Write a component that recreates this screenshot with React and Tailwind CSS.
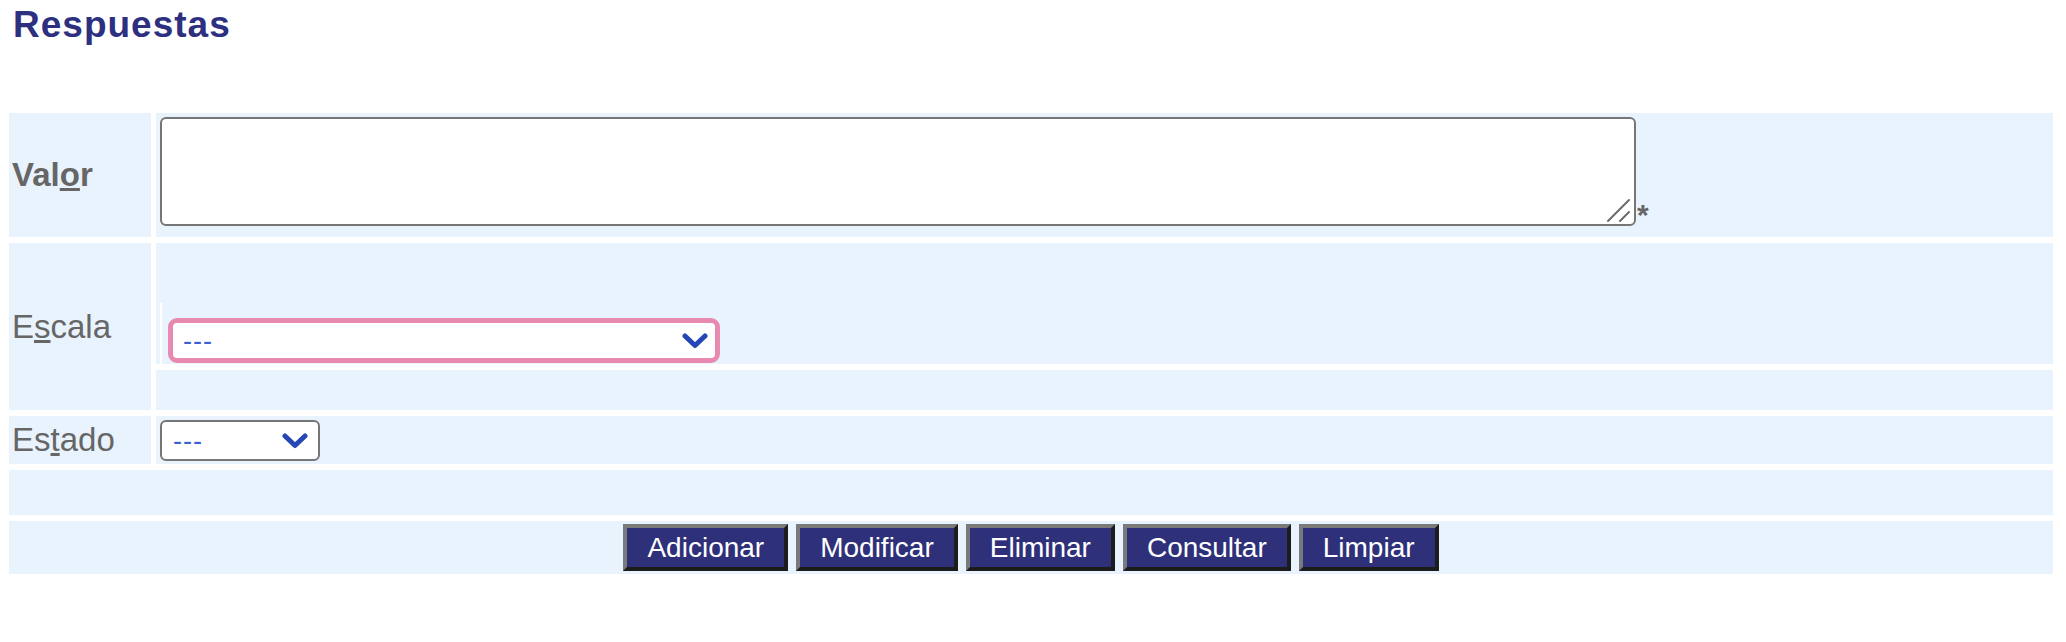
import React from "react";

function Chevron() {
  return (
    <svg width="26" height="16" viewBox="0 0 26 16" className="shrink-0">
      <polyline
        points="3,3 13,12.5 23,3"
        fill="none"
        stroke="#2546b5"
        strokeWidth="5"
        strokeLinecap="round"
        strokeLinejoin="round"
      />
    </svg>
  );
}

const buttons = ["Adicionar", "Modificar", "Eliminar", "Consultar", "Limpiar"];

export default function App() {
  return (
    <div className="w-full h-[642px] bg-white font-['Liberation_Sans',Arial,sans-serif]">
      {/* titulo */}
      <h1 className="pl-[13px] pt-[4px] text-[37px] leading-[42px] font-bold tracking-[1px] text-[#2d307f]">
        Respuestas
      </h1>

      {/* formulario */}
      <div className="mt-[67px] ml-[9px] mr-[13px] grid grid-cols-[142px_1fr] gap-x-[5px] gap-y-[6px] text-[33px] text-[#666666]">
        {/* Valor */}
        <div className="h-[124px] bg-[#e9f3fd] pl-[3px] flex items-center font-bold">
          <span className="leading-[38px]">
            Val<u>o</u>r
          </span>
        </div>
        <div className="h-[124px] bg-[#e9f3fd] pl-[4px] pt-[4px] pb-[11px] flex items-end">
          <div className="relative w-[1476px] h-[109px]">
            <textarea className="w-full h-full resize-none bg-white border-2 border-[#767676] rounded-[6px] outline-none" />
            <svg width="26" height="26" viewBox="0 0 26 26" className="absolute right-[4px] bottom-[3px]">
              <line x1="2" y1="24" x2="23" y2="3" stroke="#6a6a6a" strokeWidth="2" strokeLinecap="round" />
              <line x1="14" y1="24" x2="23" y2="15" stroke="#6a6a6a" strokeWidth="2" strokeLinecap="round" />
            </svg>
          </div>
          <span className="ml-[1px] mb-[-4px] text-[30px] leading-[30px] font-bold">*</span>
        </div>

        {/* Escala */}
        <div className="h-[167px] bg-[#e9f3fd] pl-[3px] flex items-center">
          <span className="leading-[38px]">
            E<u>s</u>cala
          </span>
        </div>
        <div className="h-[167px] flex flex-col gap-[6px]">
          <div className="h-[121px] bg-[#e9f3fd] pl-[4px] flex items-end">
            <div className="w-[2px] h-[61px] bg-white" />
            <div className="ml-[6px] mb-[1px] w-[552px] h-[45px] bg-white border-[5px] border-[#e88ab0] rounded-[9px] pl-[10px] pr-[7px] flex items-center justify-between">
              <span className="text-[27px] leading-[30px] tracking-[1px] text-[#3b5fd1]">---</span>
              <Chevron />
            </div>
          </div>
          <div className="h-[40px] bg-[#e9f3fd]" />
        </div>

        {/* Estado */}
        <div className="h-[48px] bg-[#e9f3fd] pl-[3px] flex items-center">
          <span className="leading-[38px]">
            Es<u>t</u>ado
          </span>
        </div>
        <div className="h-[48px] bg-[#e9f3fd] pl-[4px] pt-[4px]">
          <div className="w-[160px] h-[41px] bg-white border-2 border-[#767676] rounded-[6px] pl-[11px] pr-[10px] flex items-center justify-between">
            <span className="text-[27px] leading-[30px] tracking-[1px] text-[#3b5fd1]">---</span>
            <Chevron />
          </div>
        </div>

        {/* fila vacia */}
        <div className="col-span-2 h-[45px] bg-[#e9f3fd]" />

        {/* botones */}
        <div className="col-span-2 h-[53px] bg-[#e9f3fd] flex items-center justify-center gap-[8px]">
          {buttons.map((b) => (
            <button
              key={b}
              className="h-[47px] px-[20px] bg-[#2e3079] text-white text-[28px] leading-[32px] border-[4px] border-t-[#7a7a7a] border-l-[#7a7a7a] border-b-[#1c1c1c] border-r-[#1c1c1c]"
            >
              {b}
            </button>
          ))}
        </div>
      </div>
    </div>
  );
}
